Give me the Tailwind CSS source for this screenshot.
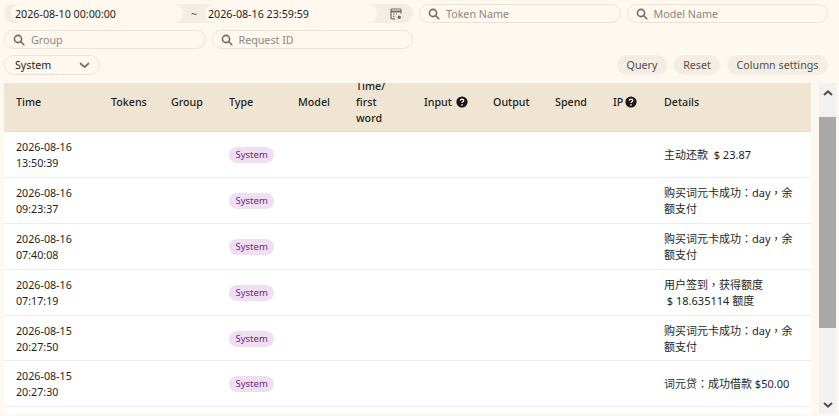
<!DOCTYPE html>
<html lang="en">
<head>
  <meta charset="UTF-8" />
  <meta name="viewport" content="width=device-width, initial-scale=1.0"/>
  <title>Logs</title>
  <script src="https://cdn.jsdelivr.net/npm/@tailwindcss/browser@4"></script>
</head>
<body class="h-[416px] w-[839px] overflow-hidden bg-[#fff8ee] text-[10.7px] leading-4 text-[#1c1f23] font-['Noto_Sans','Noto_Sans_CJK_TC',sans-serif]">
  <!-- filters -->
  <div class="h-[83px] px-1 pt-1 pr-[11px]">
    <div class="grid grid-cols-4 gap-x-[6px] gap-y-[7px]">
      <div class="col-span-2 h-[19px] rounded-full bg-[#f4ede3] flex items-center pl-[7px]">
        <div class="w-[172px] h-full rounded-full bg-[#fff8ee] pl-1 flex items-center">2026-08-10 00:00:00</div>
        <div class="w-[22px] text-center text-[#55524c]">~</div>
        <div class="w-[172px] h-full rounded-full bg-[#fff8ee] pl-[3px] flex items-center">2026-08-16 23:59:59</div>
        <svg class="ml-[13px]" width="12" height="12" viewBox="0 0 12 12" fill="none" stroke="#6f6c66" stroke-width="1.2"><path d="M5 10.9H2a1 1 0 0 1-1-1V2a1 1 0 0 1 1-1h8a1 1 0 0 1 1 1v3.5"/><path d="M1 3.5h10" stroke-width="1.8"/><path d="M3 6h1.5M3 8.4h1.5M6 6h1"/><circle cx="9.2" cy="9.2" r="1.7" fill="#6f6c66" stroke="none"/></svg>
      </div>
      <label class="h-[19px] rounded-full border border-[#ece3d6] flex items-center pl-2 gap-[6px] text-[#8a8780]">
        <svg width="12" height="12" viewBox="0 0 12 12" fill="none" stroke="#6f6c66" stroke-width="1.6"><circle cx="5" cy="5" r="3.6"/><path d="M7.8 7.8l3 3" stroke-linecap="round"/></svg>
        Token Name
      </label>
      <label class="h-[19px] rounded-full border border-[#ece3d6] flex items-center pl-2 gap-[6px] text-[#8a8780]">
        <svg width="12" height="12" viewBox="0 0 12 12" fill="none" stroke="#6f6c66" stroke-width="1.6"><circle cx="5" cy="5" r="3.6"/><path d="M7.8 7.8l3 3" stroke-linecap="round"/></svg>
        Model Name
      </label>
      <label class="h-[19px] rounded-full border border-[#ece3d6] flex items-center pl-2 gap-[6px] text-[#8a8780]">
        <svg width="12" height="12" viewBox="0 0 12 12" fill="none" stroke="#6f6c66" stroke-width="1.6"><circle cx="5" cy="5" r="3.6"/><path d="M7.8 7.8l3 3" stroke-linecap="round"/></svg>
        Group
      </label>
      <label class="h-[19px] rounded-full border border-[#ece3d6] flex items-center pl-2 gap-[6px] text-[#8a8780]">
        <svg width="12" height="12" viewBox="0 0 12 12" fill="none" stroke="#6f6c66" stroke-width="1.6"><circle cx="5" cy="5" r="3.6"/><path d="M7.8 7.8l3 3" stroke-linecap="round"/></svg>
        Request ID
      </label>
    </div>
    <div class="mt-[6px] flex justify-between">
      <div class="w-[96px] h-5 rounded-full border border-[#ece3d6] flex items-center justify-between pl-[10px] pr-[9px]">
        System
        <svg width="11" height="11" viewBox="0 0 11 11" fill="none" stroke="#6f6c66" stroke-width="1.7"><path d="M1.5 3.5l4 3.6 4-3.6" stroke-linecap="round" stroke-linejoin="round"/></svg>
      </div>
      <div class="flex gap-[7px] text-[#514e49]">
        <div class="w-[50px] h-5 rounded-full bg-[#f4ede3] flex items-center justify-center">Query</div>
        <div class="w-[46px] h-5 rounded-full bg-[#f4ede3] flex items-center justify-center">Reset</div>
        <div class="w-[101px] h-5 rounded-full bg-[#f4ede3] flex items-center justify-center">Column settings</div>
      </div>
    </div>
  </div>

  <!-- table + scrollbar -->
  <div class="flex h-[331px] pl-1">
    <div class="w-[807px] overflow-hidden bg-white">
      <table class="w-[807px] table-fixed border-collapse -mt-[5px] text-left">
        <colgroup>
          <col class="w-[95px]"/><col class="w-[60px]"/><col class="w-[58px]"/><col class="w-[69px]"/><col class="w-[58px]"/><col class="w-[68px]"/><col class="w-[69px]"/><col class="w-[62px]"/><col class="w-[58px]"/><col class="w-[51px]"/><col class="w-[159px]"/>
        </colgroup>
        <thead class="bg-[#efe5d2] font-medium">
          <tr class="border-b border-[#e4dccd]">
            <th class="font-medium pl-3 pb-[5px] pt-0">Time</th>
            <th class="font-medium pl-3 pb-[5px] pt-0">Tokens</th>
            <th class="font-medium pl-3 pb-[5px] pt-0">Group</th>
            <th class="font-medium pl-3 pb-[5px] pt-0">Type</th>
            <th class="font-medium pl-3 pb-[5px] pt-0">Model</th>
            <th class="font-medium pl-3 pr-3 pb-[5px] pt-0">Time/ first word</th>
            <th class="font-medium pl-3 pb-[5px] pt-0"><span class="flex items-center gap-1">Input <svg width="12" height="12" viewBox="0 0 12 12"><circle cx="6" cy="6" r="5.6" fill="#1c1410"/><path d="M4.4 4.7c0-2.1 3.3-2.1 3.3-.1 0 1.2-1.7 1.2-1.7 2.5" fill="none" stroke="#fff" stroke-width="1.3"/><circle cx="6" cy="8.9" r=".8" fill="#fff"/></svg></span></th>
            <th class="font-medium pl-3 pb-[5px] pt-0">Output</th>
            <th class="font-medium pl-3 pb-[5px] pt-0">Spend</th>
            <th class="font-medium pl-3 pb-[5px] pt-0"><span class="flex items-center gap-0.5">IP <svg width="12" height="12" viewBox="0 0 12 12"><circle cx="6" cy="6" r="5.6" fill="#1c1410"/><path d="M4.4 4.7c0-2.1 3.3-2.1 3.3-.1 0 1.2-1.7 1.2-1.7 2.5" fill="none" stroke="#fff" stroke-width="1.3"/><circle cx="6" cy="8.9" r=".8" fill="#fff"/></svg></span></th>
            <th class="font-medium pl-3 pb-[5px] pt-0">Details</th>
          </tr>
        </thead>
        <tbody>
          <tr class="h-[46px] border-b border-[#ececec]">
            <td class="pl-3">2026-08-16<br/>13:50:39</td><td></td><td></td>
            <td class="pl-3"><span class="inline-block rounded-full bg-[#f0dff3] px-[6.5px] text-[9.5px] text-[#6b2a7c]">System</span></td>
            <td></td><td></td><td></td><td></td><td></td><td></td>
            <td class="pl-3 pr-3 text-[11px]">主动还款 &nbsp;$ 23.87</td>
          </tr>
          <tr class="h-[46px] border-b border-[#ececec]">
            <td class="pl-3">2026-08-16<br/>09:23:37</td><td></td><td></td>
            <td class="pl-3"><span class="inline-block rounded-full bg-[#f0dff3] px-[6.5px] text-[9.5px] text-[#6b2a7c]">System</span></td>
            <td></td><td></td><td></td><td></td><td></td><td></td>
            <td class="pl-3 pr-3 text-[11px]">购买词元卡成功：day，余额支付</td>
          </tr>
          <tr class="h-[46px] border-b border-[#ececec]">
            <td class="pl-3">2026-08-16<br/>07:40:08</td><td></td><td></td>
            <td class="pl-3"><span class="inline-block rounded-full bg-[#f0dff3] px-[6.5px] text-[9.5px] text-[#6b2a7c]">System</span></td>
            <td></td><td></td><td></td><td></td><td></td><td></td>
            <td class="pl-3 pr-3 text-[11px]">购买词元卡成功：day，余额支付</td>
          </tr>
          <tr class="h-[46px] border-b border-[#ececec]">
            <td class="pl-3">2026-08-16<br/>07:17:19</td><td></td><td></td>
            <td class="pl-3"><span class="inline-block rounded-full bg-[#f0dff3] px-[6.5px] text-[9.5px] text-[#6b2a7c]">System</span></td>
            <td></td><td></td><td></td><td></td><td></td><td></td>
            <td class="pl-3 pr-3 text-[11px]">用户签到，获得额度<br/>&nbsp;$ 18.635114 额度</td>
          </tr>
          <tr class="h-[45px] border-b border-[#ececec]">
            <td class="pl-3 pt-[2px]">2026-08-15<br/>20:27:50</td><td></td><td></td>
            <td class="pl-3"><span class="inline-block rounded-full bg-[#f0dff3] px-[6.5px] text-[9.5px] text-[#6b2a7c]">System</span></td>
            <td></td><td></td><td></td><td></td><td></td><td></td>
            <td class="pl-3 pr-3 pt-[2px] text-[11px]">购买词元卡成功：day，余额支付</td>
          </tr>
          <tr class="h-[46px] border-b border-[#ececec]">
            <td class="pl-3">2026-08-15<br/>20:27:30</td><td></td><td></td>
            <td class="pl-3"><span class="inline-block rounded-full bg-[#f0dff3] px-[6.5px] text-[9.5px] text-[#6b2a7c]">System</span></td>
            <td></td><td></td><td></td><td></td><td></td><td></td>
            <td class="pl-3 pr-3 text-[11px]">词元贷：成功借款 $50.00</td>
          </tr>
        </tbody>
      </table>
    </div>
    <div class="ml-2 w-[17px] flex flex-col bg-[#f1f1f1]">
      <div class="h-[34px] flex justify-center pt-[7px]">
        <svg width="10" height="6" viewBox="0 0 10 6" fill="none" stroke="#505050" stroke-width="2"><path d="M1 5l4-3.6L9 5"/></svg>
      </div>
      <div class="h-[211px] bg-[#a8a8a8]"></div>
      <div class="flex-1 flex justify-center items-end pb-[6px]">
        <svg width="10" height="6" viewBox="0 0 10 6" fill="none" stroke="#505050" stroke-width="2"><path d="M1 1l4 3.6L9 1"/></svg>
      </div>
    </div>
  </div>
</body>
</html>
